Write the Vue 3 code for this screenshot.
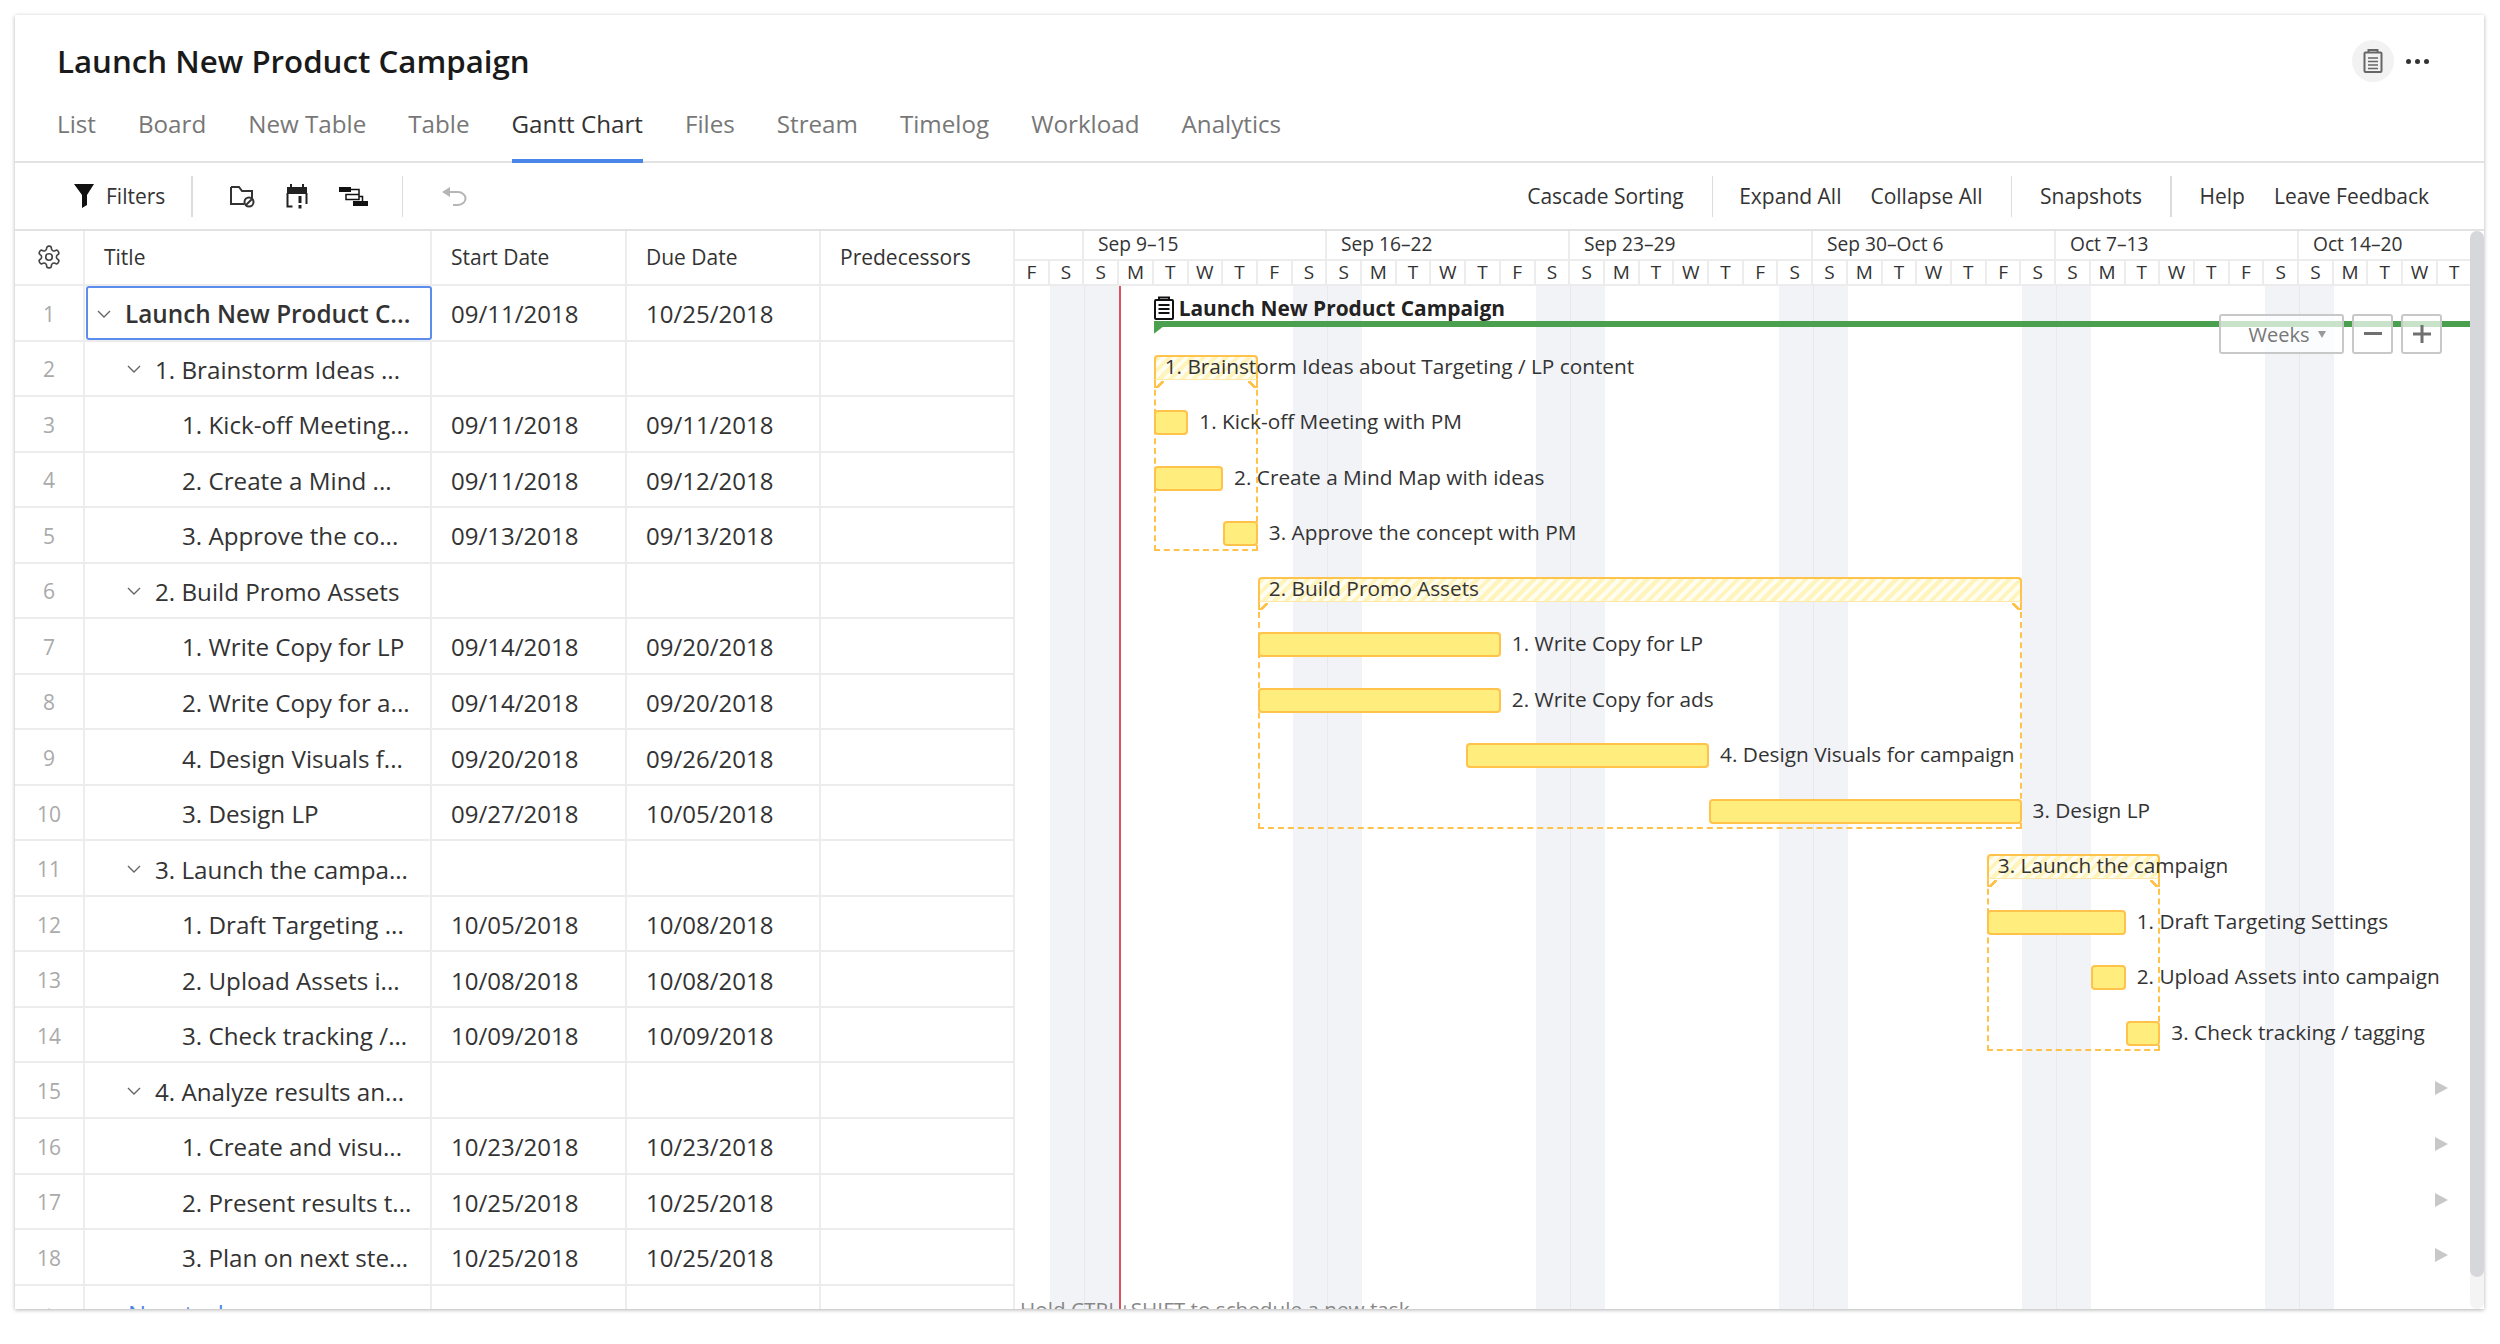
<template>
  <div class="card">
    <header class="head">
      <h1 class="page-title">Launch New Product Campaign</h1>
      <div class="head-actions">
        <span class="round-btn">
          <svg width="20" height="24" viewBox="0 0 20 24" fill="none" stroke="#666" stroke-width="2">
            <rect x="1.500" y="3.500" width="17" height="19.500" rx="1" />
            <path d="M5.500 3.500V1h9v2.500" />
            <path d="M5 9h10M5 12.500h10M5 16h10M5 19.500h10" stroke-width="1.600" />
          </svg>
        </span>
        <span class="dots"><i></i><i></i><i></i></span>
      </div>
      <nav class="tabs">
        <a v-for="t in tabs" :key="t" class="tab" :class="{ active: t === 'Gantt Chart' }">{{ t }}</a>
      </nav>
    </header>

    <div class="toolbar">
      <div class="tool-left">
        <span class="filters">
          <svg width="20" height="24" viewBox="0 0 20 24"><path d="M0 0h20l-7 11v10l-5 3V11z" fill="#111" /></svg>
          Filters
        </span>
        <span class="sep"></span>
        <span class="icons">
          <svg width="25" height="23" viewBox="0 0 25 23" fill="none" stroke="#333" stroke-width="2">
            <path d="M1 2h8l3 4h10v7M1 2v17h13" />
            <circle cx="19" cy="17" r="4.500" />
            <path d="M16 20l6-6" />
          </svg>
          <svg width="22" height="25" viewBox="0 0 22 25" fill="none">
            <path d="M1 3h20v7H1z" fill="#222" />
            <path d="M5 0v4M17 0v4" stroke="#222" stroke-width="2" />
            <path d="M1.500 9v13.500h5M20.500 9v11" stroke="#222" stroke-width="2" />
            <path d="M14 12v7" stroke="#222" stroke-width="3" />
            <rect x="12.500" y="21" width="3" height="3.500" fill="#222" />
          </svg>
          <svg width="29" height="21" viewBox="0 0 29 21" fill="none">
            <rect x="0" y="1" width="12" height="5" fill="#111" />
            <rect x="7" y="8.500" width="13" height="5" stroke="#111" stroke-width="1.500" />
            <path d="M12 3.500h8V8M20 10.500h3.500V15" stroke="#111" stroke-width="1.500" />
            <rect x="14" y="15" width="15" height="5" fill="#111" />
          </svg>
        </span>
        <span class="sep"></span>
        <svg class="undo" width="25" height="19" viewBox="0 0 25 19" fill="none">
          <path d="M8 0v10L0 5z" fill="#b5b5b5" />
          <path d="M7 5h9a7.500 6.500 0 0 1 0 13h-5" stroke="#b5b5b5" stroke-width="2" />
        </svg>
      </div>
      <div class="tool-right">
        <a>Cascade Sorting</a>
        <span class="sep first"></span>
        <a>Expand All</a>
        <a>Collapse All</a>
        <span class="sep"></span>
        <a>Snapshots</a>
        <span class="sep"></span>
        <a>Help</a>
        <a>Leave Feedback</a>
      </div>
    </div>

    <div class="main">
      <!-- таблица слева -->
      <div class="grid">
        <div class="grid-row grid-head">
          <div class="cell num-cell">
            <svg width="26" height="26" viewBox="0 0 24 24" fill="none" stroke="#444" stroke-width="1.500">
              <path d="M12.220 2h-.44a2 2 0 0 0-2 2v.18a2 2 0 0 1-1 1.730l-.43.25a2 2 0 0 1-2 0l-.15-.08a2 2 0 0 0-2.730.73l-.22.38a2 2 0 0 0 .73 2.730l.15.1a2 2 0 0 1 1 1.720v.51a2 2 0 0 1-1 1.740l-.15.09a2 2 0 0 0-.73 2.730l.22.38a2 2 0 0 0 2.730.73l.15-.08a2 2 0 0 1 2 0l.43.25a2 2 0 0 1 1 1.730V20a2 2 0 0 0 2 2h.44a2 2 0 0 0 2-2v-.18a2 2 0 0 1 1-1.730l.43-.25a2 2 0 0 1 2 0l.15.08a2 2 0 0 0 2.730-.73l.22-.39a2 2 0 0 0-.73-2.730l-.15-.08a2 2 0 0 1-1-1.740v-.5a2 2 0 0 1 1-1.740l.15-.09a2 2 0 0 0 .73-2.730l-.22-.38a2 2 0 0 0-2.730-.73l-.15.08a2 2 0 0 1-2 0l-.43-.25a2 2 0 0 1-1-1.730V4a2 2 0 0 0-2-2z" />
              <circle cx="12" cy="12" r="3" />
            </svg>
          </div>
          <div class="cell">Title</div>
          <div class="cell">Start Date</div>
          <div class="cell">Due Date</div>
          <div class="cell">Predecessors</div>
        </div>
        <div v-for="(row, i) in rows" :key="i" class="grid-row data-row">
          <div class="cell num-cell num">{{ i + 1 }}</div>
          <div class="cell title-cell" :class="['depth-' + row.depth, { selected: i === 0 }]">
            <svg v-if="row.depth < 2" class="chevron" width="14" height="8" viewBox="0 0 14 8" fill="none" stroke="#666" stroke-width="1.400">
              <path d="M1 1l6 6 6-6" />
            </svg>
            {{ row.short }}
          </div>
          <div class="cell">{{ row.start }}</div>
          <div class="cell">{{ row.due }}</div>
          <div class="cell"></div>
        </div>
        <div class="grid-row data-row">
          <div class="cell num-cell num">+</div>
          <div class="cell new-task">New task</div>
          <div class="cell"></div>
          <div class="cell"></div>
          <div class="cell"></div>
        </div>
      </div>

      <!-- диаграмма -->
      <div class="chart">
        <div class="chart-head">
          <div class="weeks">
            <div class="week week-pre"></div>
            <div v-for="w in weeks" :key="w" class="week">{{ w }}</div>
          </div>
          <div class="days">
            <div v-for="(d, i) in days" :key="i" class="day">{{ d }}</div>
          </div>
        </div>
        <div class="canvas">
          <div v-for="k in 7" :key="'w' + k" class="weekend" :style="weekendStyle(k - 1)"></div>
          <div v-for="k in 6" :key="'l' + k" class="week-line" :style="{ left: dayX(2 + 7 * (k - 1)) + 'px' }"></div>
          <div class="today" :style="{ left: dayX(3) + 'px' }"></div>

          <div v-for="(row, i) in rows" :key="i" class="chart-row">
            <template v-if="i === 0">
              <div class="root-label" :style="{ left: dayX(row.from) + 'px' }">
                <svg width="20" height="24" viewBox="0 0 20 24" fill="none" stroke="#111" stroke-width="2">
                  <rect x="1" y="4" width="18" height="19" rx="1" />
                  <path d="M5 4V1.500h10V4" />
                  <path d="M4.500 9h11M4.500 13h11M4.500 17h11" />
                </svg>
                <span>{{ row.title }}</span>
              </div>
              <div class="root-bar" :style="{ left: dayX(row.from) + 'px' }"></div>
            </template>
            <template v-else-if="row.children">
              <div class="group-bar" :style="barStyle(row)">
                <span class="group-name">{{ row.title }}</span>
              </div>
              <div class="group-box" :style="boxStyle(row)"></div>
            </template>
            <template v-else-if="row.from !== undefined">
              <div class="task-bar" :style="barStyle(row)"></div>
              <span class="task-name" :style="{ left: dayX(row.from + row.len) + 11 + 'px' }">{{ row.title }}</span>
            </template>
            <span v-else class="more"></span>
          </div>
          <div class="hint">Hold CTRL+SHIFT to schedule a new task.</div>

          <div class="zoom-ctl">
            <span class="zoom-btn weeks-btn">Weeks <i class="caret"></i></span>
            <span class="zoom-btn">
              <svg width="18" height="4" viewBox="0 0 18 4"><rect width="18" height="3" fill="#707070" /></svg>
            </span>
            <span class="zoom-btn">
              <svg width="18" height="18" viewBox="0 0 18 18"><path d="M0 7.500h18v3H0zM7.500 0h3v18h-3z" fill="#707070" /></svg>
            </span>
          </div>
        </div>
      </div>
      <div class="scroll"><div class="thumb"></div></div>
    </div>
  </div>
</template>

<script setup>
const tabs = ['List', 'Board', 'New Table', 'Table', 'Gantt Chart', 'Files', 'Stream', 'Timelog', 'Workload', 'Analytics']

const dayW = 243 / 7
const rowH = 55.54

const weeks = ['Sep 9–15', 'Sep 16–22', 'Sep 23–29', 'Sep 30–Oct 6', 'Oct 7–13', 'Oct 14–20']
const days = []
const letters = ['F', 'S', 'S', 'M', 'T', 'W', 'T']
for (let i = 0; i < 42; i++) days.push(letters[i % 7])

// from / len считаются в днях от 7 сентября
const rows = [
  { depth: 0, short: 'Launch New Product C...', title: 'Launch New Product Campaign', start: '09/11/2018', due: '10/25/2018', from: 4 },
  { depth: 1, short: '1. Brainstorm Ideas ...', title: '1. Brainstorm Ideas about Targeting / LP content', start: '', due: '', from: 4, len: 3, children: 3 },
  { depth: 2, short: '1. Kick-off Meeting...', title: '1. Kick-off Meeting with PM', start: '09/11/2018', due: '09/11/2018', from: 4, len: 1 },
  { depth: 2, short: '2. Create a Mind ...', title: '2. Create a Mind Map with ideas', start: '09/11/2018', due: '09/12/2018', from: 4, len: 2 },
  { depth: 2, short: '3. Approve the co...', title: '3. Approve the concept with PM', start: '09/13/2018', due: '09/13/2018', from: 6, len: 1 },
  { depth: 1, short: '2. Build Promo Assets', title: '2. Build Promo Assets', start: '', due: '', from: 7, len: 22, children: 4 },
  { depth: 2, short: '1. Write Copy for LP', title: '1. Write Copy for LP', start: '09/14/2018', due: '09/20/2018', from: 7, len: 7 },
  { depth: 2, short: '2. Write Copy for a...', title: '2. Write Copy for ads', start: '09/14/2018', due: '09/20/2018', from: 7, len: 7 },
  { depth: 2, short: '4. Design Visuals f...', title: '4. Design Visuals for campaign', start: '09/20/2018', due: '09/26/2018', from: 13, len: 7 },
  { depth: 2, short: '3. Design LP', title: '3. Design LP', start: '09/27/2018', due: '10/05/2018', from: 20, len: 9 },
  { depth: 1, short: '3. Launch the campa...', title: '3. Launch the campaign', start: '', due: '', from: 28, len: 5, children: 3 },
  { depth: 2, short: '1. Draft Targeting ...', title: '1. Draft Targeting Settings', start: '10/05/2018', due: '10/08/2018', from: 28, len: 4 },
  { depth: 2, short: '2. Upload Assets i...', title: '2. Upload Assets into campaign', start: '10/08/2018', due: '10/08/2018', from: 31, len: 1 },
  { depth: 2, short: '3. Check tracking /...', title: '3. Check tracking / tagging', start: '10/09/2018', due: '10/09/2018', from: 32, len: 1 },
  { depth: 1, short: '4. Analyze results an...', start: '', due: '' },
  { depth: 2, short: '1. Create and visu...', start: '10/23/2018', due: '10/23/2018' },
  { depth: 2, short: '2. Present results t...', start: '10/25/2018', due: '10/25/2018' },
  { depth: 2, short: '3. Plan on next ste...', start: '10/25/2018', due: '10/25/2018' }
]

const dayX = (n) => n * dayW - 0.2

const weekendStyle = (k) => ({
  left: dayX(1 + 7 * k) + 'px',
  width: dayW * 2 + 'px'
})

const barStyle = (row) => ({
  left: dayX(row.from) + 'px',
  width: row.len * dayW + 'px'
})

const boxStyle = (row) => ({
  left: dayX(row.from) + 'px',
  width: row.len * dayW + 'px',
  height: row.children * rowH + 5 + 'px'
})
</script>

<style scoped>
.card {
  margin: 15px;
  width: 2469px;
  height: 1294px;
  background: #fff;
  box-shadow: 0 1px 4px rgba(0, 0, 0, 0.3);
  overflow: hidden;
  display: flex;
  flex-direction: column;
  font-family: "Open Sans", sans-serif;
  color: #333;
}

.head {
  position: relative;
  height: 148px;
  padding: 23px 0 0 42px;
  box-sizing: border-box;
  border-bottom: 2px solid #e2e2e2;
  flex: none;
}

.page-title {
  margin: 0;
  font-size: 31.250px;
  line-height: 46px;
  font-weight: 600;
  color: #1a1a1a;
}

.head-actions {
  position: absolute;
  top: 25px;
  right: 55px;
  display: flex;
  align-items: center;
  gap: 12px;
}

.round-btn {
  width: 42px;
  height: 42px;
  border-radius: 50%;
  background: #f2f2f2;
  display: flex;
  align-items: center;
  justify-content: center;
}

.dots {
  display: flex;
  gap: 4px;
}

.dots i {
  width: 5px;
  height: 5px;
  border-radius: 50%;
  background: #333;
}

.tabs {
  display: flex;
  gap: 42px;
  margin-top: 5px;
}

.tab {
  height: 74px;
  box-sizing: border-box;
  padding-top: 18px;
  line-height: 34px;
  font-size: 24.200px;
  color: #777;
  white-space: nowrap;
}

.tab.active {
  color: #333;
  border-bottom: 4px solid #4a86e8;
}

.toolbar {
  height: 68px;
  flex: none;
  box-sizing: border-box;
  border-bottom: 2px solid #e2e2e2;
  display: flex;
  align-items: center;
  justify-content: space-between;
  font-size: 21px;
  padding: 0 55px 0 59px;
}

.tool-left,
.tool-right {
  display: flex;
  align-items: center;
}

.filters {
  display: flex;
  align-items: center;
  gap: 12px;
  margin-right: 26px;
}

.sep {
  width: 1.500px;
  height: 41px;
  background: #dcdcdc;
}

.icons {
  display: flex;
  align-items: center;
  gap: 31px;
  margin: 0 34px 0 37px;
}

.undo {
  margin-left: 39px;
}

.tool-right .sep {
  margin: 0 28px;
}

.tool-right .sep.first {
  margin-right: 26px;
}

.tool-right a + a {
  margin-left: 29px;
}

.main {
  flex: 1;
  min-height: 0;
  display: flex;
}

.grid {
  width: 1000px;
  flex: none;
  font-size: 24px;
}

.grid-row {
  display: grid;
  grid-template-columns: 70px 347px 195px 194px 194px;
  box-sizing: border-box;
}

.grid-head {
  height: 55px;
  font-size: 21px;
  border-bottom: 2px solid #ececec;
}

.grid-head .cell {
  padding-bottom: 2px;
}

.data-row {
  height: 55.540px;
  border-bottom: 2px solid #ececec;
}

.data-row .cell {
  padding-top: 2px;
}

.cell {
  display: flex;
  align-items: center;
  padding-left: 19px;
  border-right: 2px solid #ededed;
  white-space: nowrap;
  min-width: 0;
  position: relative;
}

.num-cell {
  padding: 0;
  justify-content: center;
}

.num {
  color: #aaa;
  font-size: 21px;
}

.title-cell {
  padding-left: 0;
  font-size: 24.200px;
}

.title-cell.depth-0 {
  padding-left: 39px;
  font-weight: 600;
  font-size: 24.300px;
}

.title-cell.depth-1 {
  padding-left: 70px;
}

.title-cell.depth-2 {
  padding-left: 97px;
}

.chevron {
  position: absolute;
  margin-left: -28px;
}

.selected {
  outline: 2px solid #5b8def;
  outline-offset: -2px;
  border-radius: 3px;
  margin-left: 1px;
  padding-left: 39px;
}

.new-task {
  color: #4a86e8;
  padding-left: 43px;
}

.chart {
  flex: 1;
  min-width: 0;
  position: relative;
  overflow: hidden;
  display: flex;
  flex-direction: column;
}

.chart-head {
  height: 55px;
  flex: none;
  box-sizing: border-box;
  border-bottom: 2px solid #ececec;
  overflow: hidden;
}

.weeks {
  display: flex;
  height: 30px;
  border-bottom: 2px solid #ececec;
  box-sizing: border-box;
}

.week {
  flex: 0 0 243px;
  box-sizing: border-box;
  border-right: 2px solid #ececec;
  padding-left: 14px;
  font-size: 19.200px;
  line-height: 26px;
  white-space: nowrap;
}

.week-pre {
  flex-basis: 69px;
}

.days {
  display: flex;
  height: 23px;
}

.day {
  flex: 0 0 34.714px;
  box-sizing: border-box;
  border-right: 2px solid #ececec;
  text-align: center;
  font-size: 19px;
  line-height: 22px;
}

.canvas {
  position: relative;
  flex: 1;
  min-height: 0;
  font-size: 20.800px;
}

.weekend {
  position: absolute;
  top: 0;
  bottom: 0;
  background: #f2f3f7;
}

.week-line {
  position: absolute;
  top: 0;
  bottom: 0;
  width: 1px;
  background: #e8e9ec;
}

.today {
  position: absolute;
  top: 0;
  bottom: 0;
  width: 2px;
  background: #d9545e;
}

.chart-row {
  position: relative;
  height: 55.540px;
}

.root-label {
  position: absolute;
  top: 10px;
  display: flex;
  align-items: center;
  gap: 5px;
  font-weight: 700;
  font-size: 20.900px;
  line-height: 24px;
  white-space: nowrap;
  color: #222;
}

.root-bar {
  position: absolute;
  top: 35px;
  right: 0;
  height: 6px;
  background: #4aa04f;
}

.root-bar::after {
  content: "";
  position: absolute;
  top: 6px;
  left: 0;
  width: 9px;
  height: 7px;
  background: #4aa04f;
  clip-path: polygon(0 0, 100% 0, 0 100%);
}

.group-bar {
  position: absolute;
  top: 13px;
  height: 25px;
  box-sizing: border-box;
  border: 2px solid #ffc24a;
  border-bottom: 1px solid #ffe9a8;
  border-radius: 4px 4px 0 0;
  background: repeating-linear-gradient(135deg, #fff4bb 0 4px, #fffdf0 4px 8px);
}

.group-bar::before,
.group-bar::after {
  content: "";
  position: absolute;
  top: 24px;
  width: 8px;
  height: 7px;
  border: 0 solid #ffc24a;
}

.group-bar::before {
  left: -2px;
  border-left-width: 2px;
  background: linear-gradient(to bottom right, transparent 36%, #ffc24a 36% 64%, transparent 64%);
}

.group-bar::after {
  right: -2px;
  border-right-width: 2px;
  background: linear-gradient(to bottom left, transparent 36%, #ffc24a 36% 64%, transparent 64%);
}

.group-name {
  position: absolute;
  top: -4px;
  left: 9px;
  line-height: 27px;
  white-space: nowrap;
  color: #333;
  z-index: 2;
}

.group-box {
  position: absolute;
  top: 38px;
  box-sizing: border-box;
  border: 2px dashed #ffc24a;
  border-top: none;
  pointer-events: none;
}

.task-bar {
  position: absolute;
  top: 13px;
  height: 25px;
  box-sizing: border-box;
  border: 2px solid #ffc24a;
  border-radius: 4px;
  background: #ffee7e;
  z-index: 1;
}

.task-name {
  position: absolute;
  top: 11px;
  line-height: 27px;
  white-space: nowrap;
  color: #333;
}

.more {
  position: absolute;
  right: 22px;
  top: 18px;
  border-left: 13px solid #c8c8c8;
  border-top: 7px solid transparent;
  border-bottom: 7px solid transparent;
}

.hint {
  position: relative;
  padding: 8px 0 0 5px;
  margin-top: 1px;
  color: #888;
  font-size: 20.700px;
  line-height: 28px;
  white-space: nowrap;
}

.zoom-ctl {
  position: absolute;
  top: 28px;
  right: 28px;
  display: flex;
  gap: 8px;
  z-index: 3;
  font-size: 20px;
}

.zoom-btn {
  width: 41px;
  height: 40px;
  box-sizing: border-box;
  border: 2px solid #c8c8c8;
  border-radius: 3px;
  background: rgba(255, 255, 255, 0.7);
  display: flex;
  align-items: center;
  justify-content: center;
  color: #777;
}

.weeks-btn {
  width: 125px;
  gap: 9px;
  padding-left: 12px;
}

.caret {
  border-top: 7px solid #999;
  border-left: 4px solid transparent;
  border-right: 4px solid transparent;
}

.scroll {
  width: 14px;
  flex: none;
  background: #f4f4f5;
  border-radius: 7px;
}

.thumb {
  height: 1046px;
  background: #d6d7da;
  border-radius: 7px;
}
</style>

<style>
html,
body {
  margin: 0;
  background: #fff;
  overflow: hidden;
}
</style>
